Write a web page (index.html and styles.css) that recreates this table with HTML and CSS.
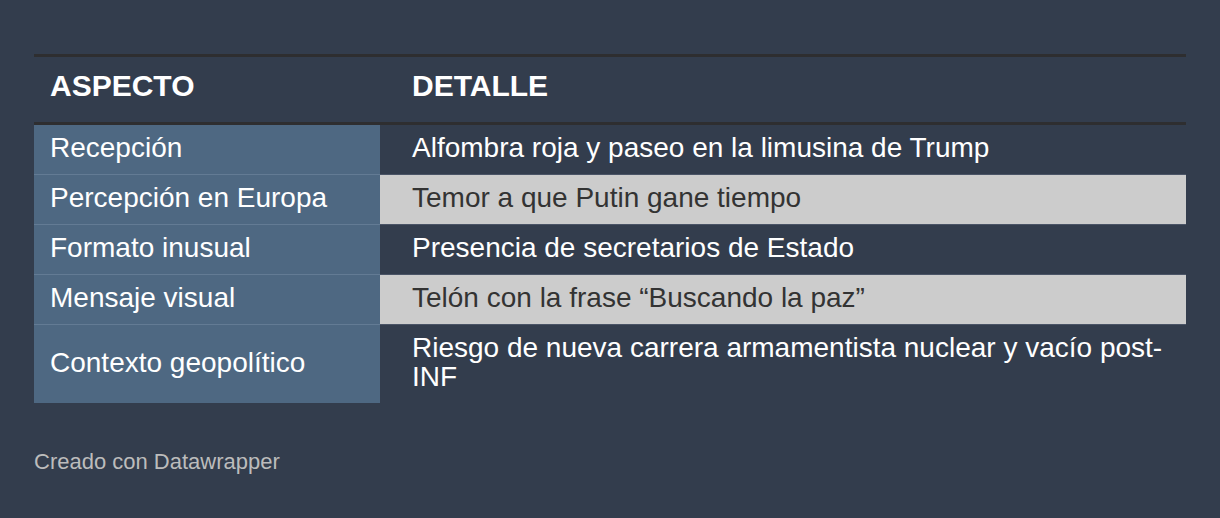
FILE: index.html
```html
<!DOCTYPE html>
<html lang="es">
<head>
<meta charset="utf-8">
<link rel="stylesheet" href="styles.css">
</head>
<body>
<div class="wrap">
  <table class="tbl">
    <thead>
      <tr>
        <th class="c1">ASPECTO</th>
        <th class="c2">DETALLE</th>
      </tr>
    </thead>
    <tbody>
      <tr>
        <td class="c1">Recepción</td>
        <td class="c2">Alfombra roja y paseo en la limusina de Trump</td>
      </tr>
      <tr class="alt">
        <td class="c1">Percepción en Europa</td>
        <td class="c2">Temor a que Putin gane tiempo</td>
      </tr>
      <tr>
        <td class="c1">Formato inusual</td>
        <td class="c2">Presencia de secretarios de Estado</td>
      </tr>
      <tr class="alt">
        <td class="c1">Mensaje visual</td>
        <td class="c2">Telón con la frase “Buscando la paz”</td>
      </tr>
      <tr>
        <td class="c1">Contexto geopolítico</td>
        <td class="c2">Riesgo de nueva carrera armamentista nuclear y vacío post-INF</td>
      </tr>
    </tbody>
  </table>
  <div class="credit">Creado con Datawrapper</div>
</div>
</body>
</html>
```

FILE: styles.css
```css
html, body {
  margin: 0;
  padding: 0;
  background: #333d4d;
}
body {
  font-family: "Liberation Sans", Arial, sans-serif;
  color: #ffffff;
}
.wrap {
  padding: 54px 34px 0 34px;
}
.tbl {
  width: 1152px;
  border-collapse: collapse;
  table-layout: fixed;
}
.tbl th {
  font-size: 30px;
  font-weight: bold;
  text-align: left;
  height: 68px;
  padding: 0 16px 8px 16px;
  box-sizing: border-box;
  border-top: 3px solid #2e2e30;
  border-bottom: 3px solid #2e2e30;
}
.tbl th.c1 { width: 346px; }
.tbl th.c2 { padding-left: 32px; }
.tbl td {
  font-size: 28px;
  line-height: 29px;
  padding: 8px 16px 12px 16px;
  vertical-align: middle;
  border-top: 1px solid #4a5466;
}
.tbl tbody tr:first-child td { border-top: none; }
.tbl td.c1 {
  background: #4e6882;
  border-top-color: #637b94;
}
.tbl td.c2 { padding-left: 32px; }
.tbl tr.alt td.c2 {
  background: #cccccc;
  color: #333333;
}
.credit {
  margin-top: 46px;
  font-size: 22px;
  color: #bcbcbc;
}
```
